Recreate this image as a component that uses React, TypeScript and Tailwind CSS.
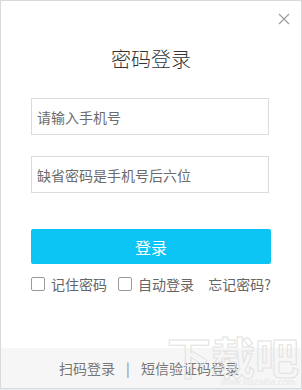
export default function App() {
  return (
    <div className="w-[302px] h-[390px] bg-[#e9eef2] p-0 font-['Noto_Sans_CJK_SC','Noto_Sans',sans-serif]">
      <div className="relative w-[302px] h-[389px] bg-white border border-[#d9d9d9] flex flex-col">
        {/* close */}
        <button className="absolute right-[11px] top-[12px] w-[12px] h-[12px] text-[#9a9a9a]">
          <svg viewBox="0 0 12 12" width="12" height="12" stroke="currentColor" strokeWidth="1.1" fill="none">
            <path d="M1 1L11 11M11 1L1 11" />
          </svg>
        </button>

        <h1 className="mt-[44px] text-center text-[20px] leading-[28px] text-[#333] font-light">密码登录</h1>

        <div className="mt-[25px] px-[30px] flex flex-col">
          <input
            className="h-[37px] w-[238px] border border-[#dcdcdc] px-[5px] text-[14px] text-[#333] placeholder:text-[#6b6b6b] outline-none"
            placeholder="请输入手机号"
          />
          <input
            className="mt-[21px] h-[37px] w-[238px] border border-[#dcdcdc] px-[5px] text-[14px] text-[#333] placeholder:text-[#6b6b6b] outline-none"
            placeholder="缺省密码是手机号后六位"
          />
          <button className="mt-[36px] h-[35px] w-[240px] rounded-[2px] bg-[#0dc5f5] text-white text-[16px]">登录</button>

          <div className="mt-[10px] flex items-center text-[14px] text-[#666] leading-[20px]">
            <span className="w-[14px] h-[14px] border border-[#999] rounded-[2px]" />
            <span className="ml-[6px]">记住密码</span>
            <span className="ml-[11px] w-[14px] h-[14px] border border-[#999] rounded-[2px]" />
            <span className="ml-[6px]">自动登录</span>
            <span className="ml-auto">忘记密码?</span>
          </div>
        </div>

        <div className="mt-auto h-[40px] bg-[#f6f6f6] flex items-center justify-center pr-[4px] text-[14px] text-[#777] relative">
          <span>扫码登录</span>
          <span className="mx-[11px] text-[#888]">|</span>
          <span>短信验证码登录</span>
        </div>

        {/* watermark */}
        <div className="absolute right-[2px] bottom-[10px] text-[44px] leading-[44px] font-bold text-transparent [-webkit-text-stroke:1px_#e2e2e2] pointer-events-none">
          下载吧
        </div>
        <div className="absolute right-[6px] bottom-[1px] text-[9px] leading-[10px] text-[#e6e6e6] pointer-events-none font-['Liberation_Sans',sans-serif]">
          www.xiazaiba.com
        </div>
      </div>
    </div>
  );
}
